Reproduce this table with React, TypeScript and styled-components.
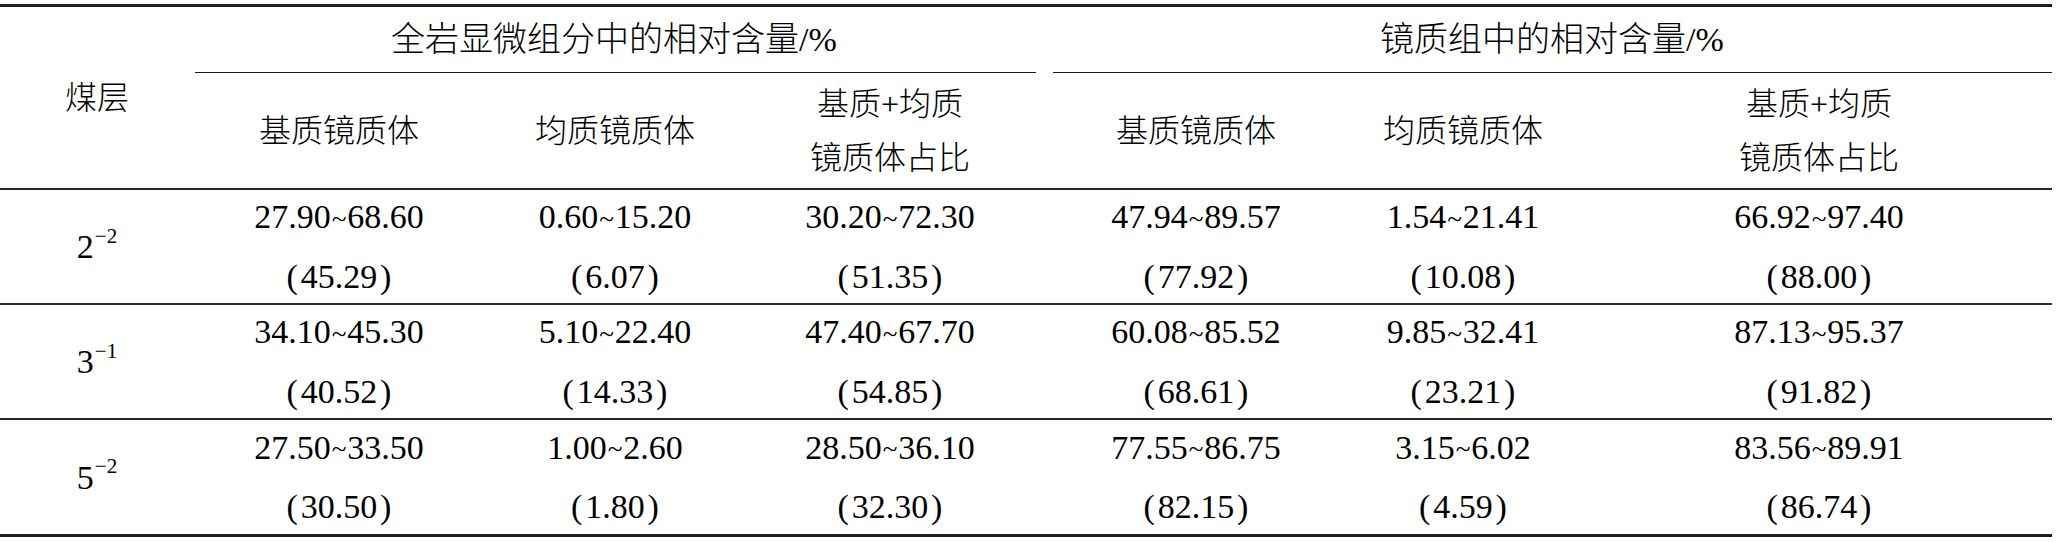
import React from "react";
import styled, { createGlobalStyle } from "styled-components";

const SERIF = `"Liberation Serif", "Tinos", "Times New Roman", "DejaVu Serif", serif`;
const CJK = `"Liberation Serif", "Noto Sans CJK SC", "Noto Sans CJK TC", sans-serif`;

const GlobalStyle = createGlobalStyle`
  html, body {
    margin: 0;
    padding: 0;
    background: #ffffff;
  }
  body {
    font-family: ${CJK};
    color: #000;
  }
`;

const Page = styled.div`
  padding-top: 4px;
  width: 2057px;
  height: 542px;
  box-sizing: border-box;
  background: #fff;
`;

const Table = styled.div`
  width: 2052px;
  display: grid;
  grid-template-columns: 176px 326px 226px 324px 288px 246px 466px;
  grid-template-rows: 66px 117px 115px 115px 114px;
  border-top: 3px solid #1f1f1f;
  border-bottom: 3px solid #1f1f1f;
`;

const Cell = styled.div<{ $rule?: boolean }>`
  box-sizing: border-box;
  display: flex;
  flex-direction: column;
  align-items: center;
  justify-content: center;
  border-bottom: ${(p) => (p.$rule ? "2px solid #2a2a2a" : "none")};
`;

const HeadText = styled.div`
  font-family: ${CJK};
  font-weight: 300;
  font-size: 32px;
  line-height: 54px;
  white-space: nowrap;
`;

const LayerHead = styled(Cell)`
  grid-row: 1 / span 2;
  grid-column: 1;
  padding-left: 18px;
`;

const GroupCell = styled.div<{ $col: number }>`
  grid-row: 1;
  grid-column: ${(p) => p.$col} / span 3;
  display: flex;
  flex-direction: column;
`;

const GroupTitle = styled.div`
  flex: 1;
  display: flex;
  align-items: center;
  justify-content: center;
  font-family: ${CJK};
  font-weight: 300;
  font-size: 34px;
  line-height: 54px;
  white-space: nowrap;
`;

const GroupRule = styled.div<{ $ml: number; $mr: number }>`
  height: 0;
  border-top: 1px solid #1a1a1a;
  margin-left: ${(p) => p.$ml}px;
  margin-right: ${(p) => p.$mr}px;
`;

const SubHead = styled(Cell)`
  grid-row: 2;
  text-align: center;
`;

const LabelCell = styled(Cell)`
  padding-left: 18px;
  font-family: ${SERIF};
  font-size: 34px;
  line-height: 57px;
`;

const DataCell = styled(Cell)`
  font-family: ${SERIF};
  font-size: 34px;
  line-height: 57px;
  white-space: nowrap;
`;

const Tilde = styled.span`
  display: inline-block;
  font-size: 0.8em;
  margin: 0 1px;
  vertical-align: 0.02em;
`;

const Sup = styled.span`
  font-size: 0.62em;
  vertical-align: 0.72em;
  line-height: 0;
  margin-left: 1px;
`;

const Pct = styled.span`
  font-family: ${SERIF};
`;

type Row = {
  base: string;
  exp: string;
  values: [string, string, string][];
};

const rows: Row[] = [
  {
    base: "2",
    exp: "−2",
    values: [
      ["27.90", "68.60", "45.29"],
      ["0.60", "15.20", "6.07"],
      ["30.20", "72.30", "51.35"],
      ["47.94", "89.57", "77.92"],
      ["1.54", "21.41", "10.08"],
      ["66.92", "97.40", "88.00"],
    ],
  },
  {
    base: "3",
    exp: "−1",
    values: [
      ["34.10", "45.30", "40.52"],
      ["5.10", "22.40", "14.33"],
      ["47.40", "67.70", "54.85"],
      ["60.08", "85.52", "68.61"],
      ["9.85", "32.41", "23.21"],
      ["87.13", "95.37", "91.82"],
    ],
  },
  {
    base: "5",
    exp: "−2",
    values: [
      ["27.50", "33.50", "30.50"],
      ["1.00", "2.60", "1.80"],
      ["28.50", "36.10", "32.30"],
      ["77.55", "86.75", "82.15"],
      ["3.15", "6.02", "4.59"],
      ["83.56", "89.91", "86.74"],
    ],
  },
];

const subHeads: string[][] = [
  ["基质镜质体"],
  ["均质镜质体"],
  ["基质+均质", "镜质体占比"],
  ["基质镜质体"],
  ["均质镜质体"],
  ["基质+均质", "镜质体占比"],
];

export default function App() {
  return (
    <>
      <GlobalStyle />
      <Page>
        <Table>
          <LayerHead $rule>
            <HeadText>煤层</HeadText>
          </LayerHead>
          <GroupCell $col={2}>
            <GroupTitle>
              全岩显微组分中的相对含量<Pct>/%</Pct>
            </GroupTitle>
            <GroupRule $ml={19} $mr={16} />
          </GroupCell>
          <GroupCell $col={5}>
            <GroupTitle>
              镜质组中的相对含量<Pct>/%</Pct>
            </GroupTitle>
            <GroupRule $ml={1} $mr={0} />
          </GroupCell>
          {subHeads.map((lines, i) => (
            <SubHead key={i} $rule>
              {lines.map((l) => (
                <HeadText key={l}>{l}</HeadText>
              ))}
            </SubHead>
          ))}
          {rows.map((r, ri) => {
            const rule = ri < rows.length - 1;
            return (
              <React.Fragment key={ri}>
                <LabelCell $rule={rule}>
                  <span>
                    {r.base}
                    <Sup>{r.exp}</Sup>
                  </span>
                </LabelCell>
                {r.values.map(([lo, hi, mean], ci) => (
                  <DataCell key={ci} $rule={rule}>
                    <div>
                      {lo}
                      <Tilde>~</Tilde>
                      {hi}
                    </div>
                    <div>({"\u200A"}{mean}{"\u200A"})</div>
                  </DataCell>
                ))}
              </React.Fragment>
            );
          })}
        </Table>
      </Page>
    </>
  );
}
